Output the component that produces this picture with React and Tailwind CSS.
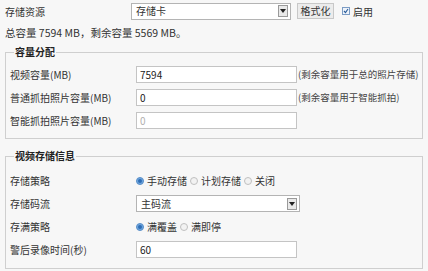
import React from 'react';

const font = { fontFamily: '"Noto Sans CJK SC", "Noto Sans", sans-serif' };

const DropArrow = () => (
  <span className="flex items-center justify-center w-[10px] h-[12px] border border-[#9a9a9a] bg-[#e9e9e9]">
    <svg width="6" height="4" viewBox="0 0 6 4">
      <path d="M0 0 L6 0 L3 4 Z" fill="#222" />
    </svg>
  </span>
);

const Select = ({ value, width = 'w-[160px]' }) => (
  <div className={`${width} h-[17px] flex items-center justify-between border border-[#b4b4b4] bg-white pl-[4px] pr-[2px]`}>
    <span className="leading-none">{value}</span>
    <DropArrow />
  </div>
);

const Input = ({ value, disabled }) => (
  <div
    className={`w-[161px] h-[17px] shrink-0 flex items-center border border-[#c4c4c4] bg-white pl-[3px] leading-none ${
      disabled ? 'text-[#b0b0b0]' : 'text-[#222]'
    }`}
  >
    {value}
  </div>
);

const Radio = ({ checked, label }) => (
  <span className="flex items-center gap-[3px] mr-[3px]">
    {checked ? (
      <span className="w-[8px] h-[8px] rounded-full border border-[#5a8fc8] bg-[#6fa6df] flex items-center justify-center">
        <span className="w-[4px] h-[4px] rounded-full bg-[#2d6db5]" />
      </span>
    ) : (
      <span className="w-[8px] h-[8px] rounded-full border border-[#c0c0c0] bg-[#f2f2f2]" />
    )}
    <span>{label}</span>
  </span>
);

const Row = ({ label, children, hint }) => (
  <div className="flex items-center h-[23px] whitespace-nowrap">
    <span className="w-[126px] shrink-0">{label}</span>
    {children}
    {hint && <span className="ml-[1px] text-[9.5px] text-[#444]">{hint}</span>}
  </div>
);

const Group = ({ title, children, className }) => (
  <fieldset className={`mx-[5px] border border-[#cfcfcf] pl-[4px] ${className}`}>
    <legend className="ml-[4px] px-[1px] font-bold text-[#222] leading-[14px]">{title}</legend>
    {children}
  </fieldset>
);

export default function App() {
  return (
    <div className="w-[428px] h-[271px] bg-[#f7f7f7] text-[10px] text-[#333] overflow-hidden" style={font}>
      {/* 存储资源 */}
      <div className="flex items-center pl-[5px] pt-[2px] h-[20px]">
        <span className="w-[126px] shrink-0">存储资源</span>
        <Select value="存储卡" />
        <button className="ml-[6px] h-[16px] w-[37px] border border-[#c8c8c8] bg-[#ececec] text-[#333] leading-none">
          格式化
        </button>
        <span className="ml-[8px] w-[8px] h-[8px] border border-[#7c9cc4] bg-[#eef3fa] flex items-center justify-center">
          <svg width="6" height="6" viewBox="0 0 6 6">
            <path d="M1 3 L2.5 4.6 L5 1" stroke="#2a5d9a" strokeWidth="1.1" fill="none" />
          </svg>
        </span>
        <span className="ml-[3px]">启用</span>
      </div>

      <div className="pl-[5px] h-[25px] pt-[1px] flex items-center text-[10.5px]">总容量 7594 MB，剩余容量 5569 MB。</div>

      <Group title="容量分配" className="pb-[6px]">
        <div className="pt-[4px]">
          <Row label="视频容量(MB)" hint="(剩余容量用于总的照片存储)">
            <Input value="7594" />
          </Row>
          <Row label="普通抓拍照片容量(MB)" hint="(剩余容量用于智能抓拍)">
            <Input value="0" />
          </Row>
          <Row label="智能抓拍照片容量(MB)">
            <Input value="0" disabled />
          </Row>
        </div>
      </Group>

      <Group title="视频存储信息" className="mt-[10px] pb-[7px]">
        <div className="pt-[6px]">
          <Row label="存储策略">
            <span className="flex items-center">
              <Radio checked label="手动存储" />
              <Radio label="计划存储" />
              <Radio label="关闭" />
            </span>
          </Row>
          <Row label="存储码流">
            <Select value="主码流" width="w-[164px]" />
          </Row>
          <Row label="存满策略">
            <span className="flex items-center">
              <Radio checked label="满覆盖" />
              <Radio label="满即停" />
            </span>
          </Row>
          <Row label="警后录像时间(秒)">
            <Input value="60" />
          </Row>
        </div>
      </Group>
    </div>
  );
}
